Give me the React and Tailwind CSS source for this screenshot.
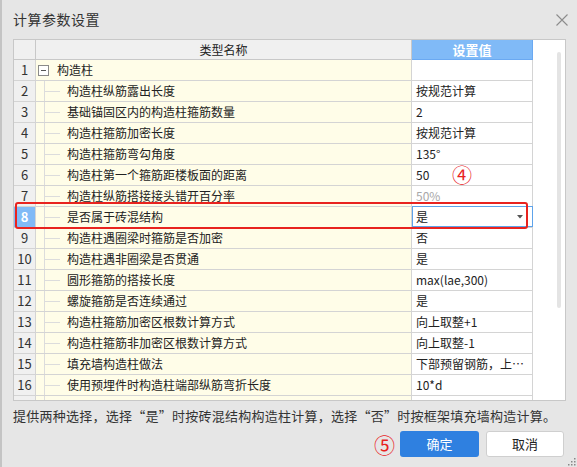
import React from "react";

const rows = [
  { n: 1, name: "构造柱", value: "", group: true },
  { n: 2, name: "构造柱纵筋露出长度", value: "按规范计算" },
  { n: 3, name: "基础锚固区内的构造柱箍筋数量", value: "2" },
  { n: 4, name: "构造柱箍筋加密长度", value: "按规范计算" },
  { n: 5, name: "构造柱箍筋弯勾角度", value: "135°" },
  { n: 6, name: "构造柱第一个箍筋距楼板面的距离", value: "50" },
  { n: 7, name: "构造柱纵筋搭接接头错开百分率", value: "50%", disabled: true },
  { n: 8, name: "是否属于砖混结构", value: "是", selected: true },
  { n: 9, name: "构造柱遇圈梁时箍筋是否加密", value: "否" },
  { n: 10, name: "构造柱遇非圈梁是否贯通", value: "是" },
  { n: 11, name: "圆形箍筋的搭接长度", value: "max(lae,300)" },
  { n: 12, name: "螺旋箍筋是否连续通过", value: "是" },
  { n: 13, name: "构造柱箍筋加密区根数计算方式", value: "向上取整+1" },
  { n: 14, name: "构造柱箍筋非加密区根数计算方式", value: "向上取整-1" },
  { n: 15, name: "填充墙构造柱做法", value: "下部预留钢筋，上部预留埋件" },
  { n: 16, name: "使用预埋件时构造柱端部纵筋弯折长度", value: "10*d" },
  { n: 17, name: "构造柱纵筋锚固长度", value: "" },
];

function Row({ r }) {
  return (
    <div className="flex h-[21px] shrink-0">
      <div
        className={
          r.selected
            ? "w-[22px] shrink-0 border-r border-b border-[#d4d4d4] bg-[#80baf7] text-white font-bold text-[13px] leading-[20px] text-center"
            : "w-[22px] shrink-0 border-r border-b border-[#d4d4d4] bg-[#f0f0f0] text-[#333] text-[13px] leading-[20px] text-center"
        }
      >
        {r.n}
      </div>
      <div className="w-[376px] shrink-0 border-r border-b border-[#d4d4d4] bg-[#fffde8] flex items-stretch text-[12px] leading-[20px] text-[#222]">
        {r.group ? (
          <div className="flex items-center">
            <div className="w-[2px]" />
            <div className="w-[11px] h-[11px] border border-[#8a8a8a] bg-white flex items-center justify-center">
              <div className="w-[5px] h-px bg-[#555]" />
            </div>
            <div className="w-[8px]" />
            <span>{r.name}</span>
          </div>
        ) : (
          <div className="flex items-stretch">
            <div className="w-[8px] shrink-0" />
            <div className="w-[16px] shrink-0 border-l border-[#dcdcdc] flex items-center">
              <div className="w-full h-px bg-[#dcdcdc]" />
            </div>
            <div className="w-[7px] shrink-0" />
            <span className="whitespace-nowrap">{r.name}</span>
          </div>
        )}
      </div>
      {r.selected ? (
        <div className="w-[121px] shrink-0 border-b border-[#d4d4d4] bg-white">
          <div className="h-[21px] border border-[#5ea3ea] -mt-px flex items-center justify-between pl-[3px] pr-[9px] text-[12px] text-[#222]">
            <span>{r.value}</span>
            <svg width="6" height="4" viewBox="0 0 6 4">
              <path d="M0 0 L6 0 L3 3.5 Z" fill="#555" />
            </svg>
          </div>
        </div>
      ) : (
        <div
          className={
            r.disabled
              ? "w-[121px] shrink-0 border-r border-b border-[#d4d4d4] bg-white pl-[4px] text-[12px] leading-[20px] text-[#a8a8a8] whitespace-nowrap overflow-hidden text-ellipsis"
              : "w-[121px] shrink-0 border-r border-b border-[#d4d4d4] bg-white pl-[4px] pr-[6px] text-[12px] leading-[20px] text-[#222] whitespace-nowrap overflow-hidden text-ellipsis"
          }
        >
          {r.value}
        </div>
      )}
    </div>
  );
}

export default function App() {
  return (
    <div
      lang="zh-CN"
      className="w-[577px] h-[467px] bg-[#e6e6e6] border-l-2 border-[#c4c4c4] flex flex-col font-['Noto_Sans_CJK_SC','Microsoft_YaHei',sans-serif] overflow-hidden relative"
    >
      {/* Title bar */}
      <div className="h-[39px] shrink-0 flex items-center justify-between pl-[11px] pr-[9px]">
        <span className="text-[14px] text-[#333] tracking-[0.5px]">计算参数设置</span>
        <svg width="12" height="12" viewBox="0 0 12 12">
          <path d="M0.5 0.5 L11.5 11.5 M11.5 0.5 L0.5 11.5" stroke="#8c8c8c" strokeWidth="1.1" />
        </svg>
      </div>

      {/* Table */}
      <div className="ml-[11px] w-[553px] h-[362px] shrink-0 border border-[#c8c8c8] bg-white flex overflow-hidden relative">
        <div className="flex flex-col w-[519px] shrink-0">
          <div className="flex h-[20px] shrink-0 text-[12px] leading-[19px]">
            <div className="w-[22px] shrink-0 border-r border-b border-[#c8c8c8] bg-[#f0f0f0]" />
            <div className="w-[376px] shrink-0 border-r border-b border-[#c8c8c8] bg-[#f0f0f0] text-center text-[#222]">
              类型名称
            </div>
            <div className="w-[121px] shrink-0 border-r border-b border-[#6aa9f2] bg-[#80baf7] text-center text-white font-bold text-[13px]">
              设置值
            </div>
          </div>
          {rows.map((r) => (
            <Row key={r.n} r={r} />
          ))}
        </div>
        <div className="flex-1 flex justify-end pr-[4px] pt-[12px]">
          <div className="w-[4px] h-[256px] bg-[#e4e4e4] rounded-[2px]" />
        </div>

        {/* annotations */}
        <div className="absolute left-[1px] top-[162px] w-[513px] h-[27px] border-2 border-[#e8231f] rounded-[3px] pointer-events-none" />
        <span className="absolute left-[438px] top-[122px] text-[20px] leading-[26px] text-[#e8231f]">④</span>
      </div>

      {/* description */}
      <div className="h-[30px] shrink-0 flex items-center pl-[11px] text-[13px] text-[#333] whitespace-nowrap tracking-[0.25px]">
        提供两种选择，选择“是”时按砖混结构构造柱计算，选择“否”时按框架填充墙构造计算。
      </div>

      {/* buttons */}
      <div className="h-[26px] shrink-0 flex items-center justify-end pr-[13px]">
        <span className="text-[21px] leading-[26px] text-[#e8231f] mr-[5px]">⑤</span>
        <button className="w-[79px] h-[26px] rounded-[3px] bg-[#2f80e0] text-white text-[13px]">
          确定
        </button>
        <button className="ml-[7px] w-[78px] h-[26px] rounded-[3px] bg-white border border-[#cfcfcf] text-[#222] text-[13px]">
          取消
        </button>
      </div>

      {/* resize grip */}
      <svg className="absolute right-[1px] bottom-[1px]" width="9" height="9" viewBox="0 0 9 9">
        <rect x="7" y="1" width="1.5" height="1.5" fill="#888" />
        <rect x="4" y="4" width="1.5" height="1.5" fill="#888" />
        <rect x="7" y="4" width="1.5" height="1.5" fill="#888" />
        <rect x="1" y="7" width="1.5" height="1.5" fill="#888" />
        <rect x="4" y="7" width="1.5" height="1.5" fill="#888" />
        <rect x="7" y="7" width="1.5" height="1.5" fill="#888" />
      </svg>
    </div>
  );
}
